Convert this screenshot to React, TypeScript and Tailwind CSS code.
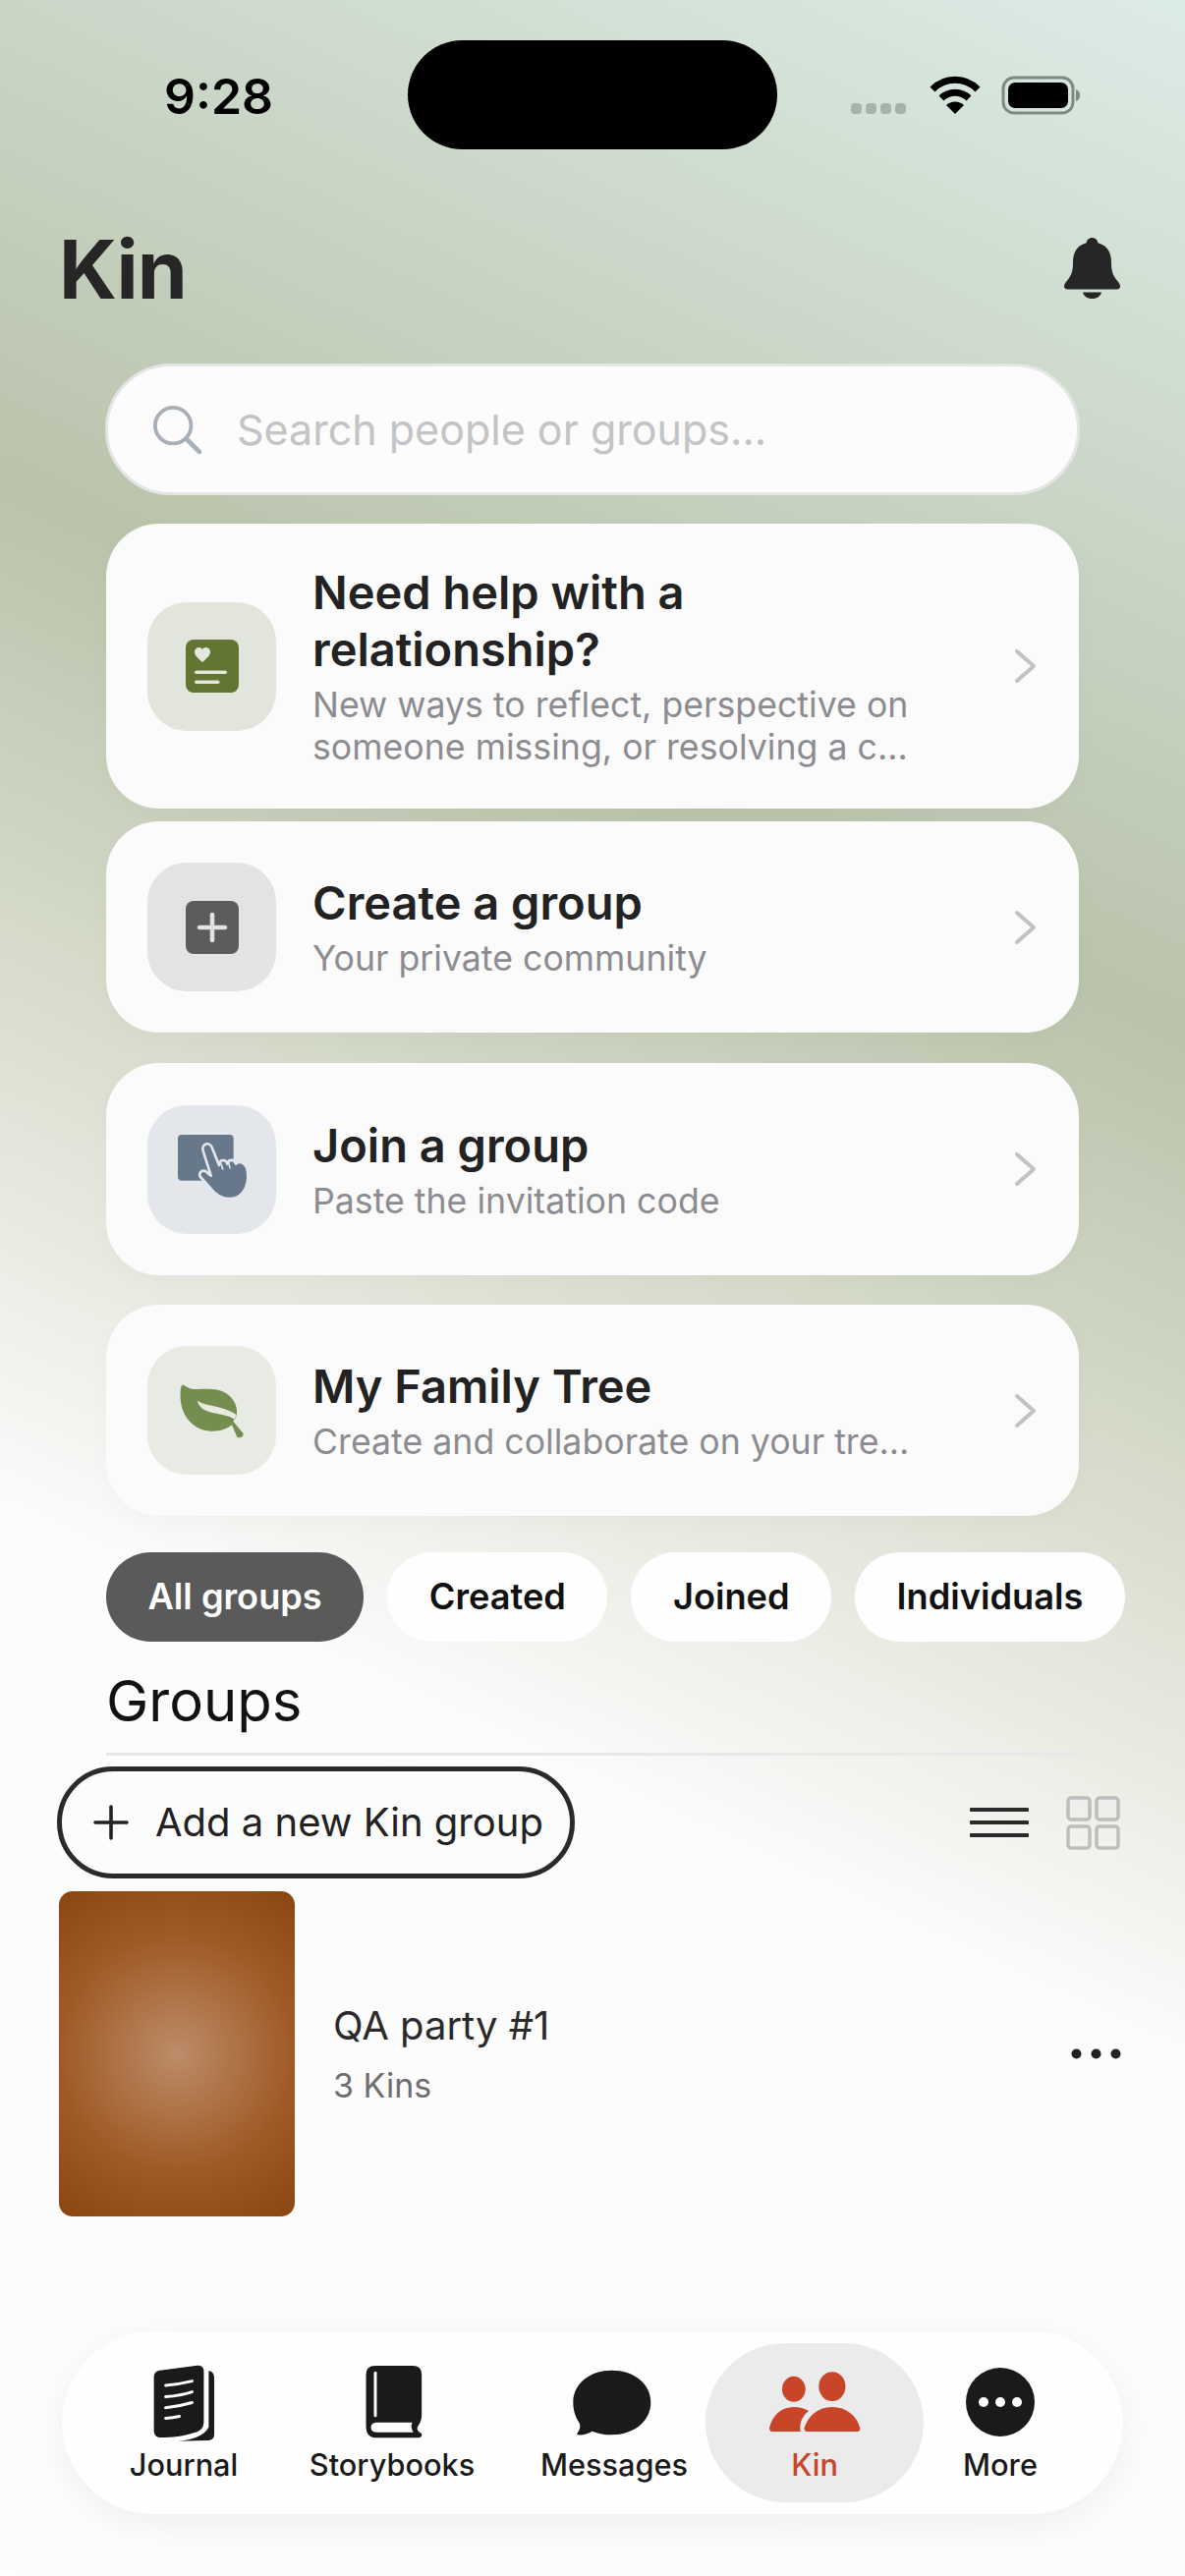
const cardShadow = 'shadow-[0_6px_24px_rgba(0,0,0,0.025)]'

function Chevron() {
  return (
    <svg width="24" height="36" viewBox="0 0 24 36" fill="none" className="ml-auto shrink-0">
      <path d="M3 3 L20 18 L3 33" stroke="#c2c2c2" strokeWidth="4" strokeLinecap="round" strokeLinejoin="round" />
    </svg>
  )
}

function NoteIcon() {
  return (
    <svg width="54" height="54" viewBox="0 0 54 54">
      <rect width="54" height="54" rx="8" fill="#627532" />
      <path d="M17 23 C12 18.5 9 16 9 12.5 C9 9.8 11.2 8 13.6 8 C15.2 8 16.3 8.8 17 10 C17.7 8.8 18.8 8 20.4 8 C22.8 8 25 9.8 25 12.5 C25 16 22 18.5 17 23Z" fill="#e4e7dc" />
      <rect x="9" y="31.5" width="33" height="3.6" rx="1.8" fill="#e4e7dc" />
      <rect x="9" y="41.5" width="25.5" height="3.6" rx="1.8" fill="#e4e7dc" />
    </svg>
  )
}

function PlusIcon() {
  return (
    <svg width="54" height="54" viewBox="0 0 54 54">
      <rect width="54" height="54" rx="8" fill="#5c5c5c" />
      <path d="M27 14 V40 M14 27 H40" stroke="#e2e2e2" strokeWidth="4.5" strokeLinecap="round" />
    </svg>
  )
}

function HandIcon() {
  return (
    <svg width="131" height="131" viewBox="60 43 393 393">
      <rect x="153" y="133" width="170" height="140" rx="12" fill="#67788a" />
      <path
        d="M222 262 C214 250 228 238 240 246 L254 258 L230 182 C224 160 250 152 258 174 L279 226 C280 208 300 206 304 222 C308 206 326 208 330 222 C345 208 364 224 366 246 C372 296 346 330 310 328 C284 328 268 316 254 298 Z"
        fill="#67788a"
        stroke="#e3e7eb"
        strokeWidth="8"
        strokeLinejoin="round"
      />
      <path d="M285 222 L290 238 M308 218 L312 234" stroke="#e3e7eb" strokeWidth="5" strokeLinecap="round" />
    </svg>
  )
}

function LeafIcon() {
  return (
    <svg width="131" height="131" viewBox="60 62 393 393">
      <path
        d="M165 182 C172 178 180 190 195 193 C225 198 262 186 296 204 C322 218 336 246 333 270 C332 280 326 288 322 292 L352 328 C356 338 342 346 334 340 L318 303 C296 322 258 328 224 316 C188 302 166 268 162 232 C160 212 160 192 165 182Z"
        fill="#748e50"
      />
      <path d="M212 228 C232 248 282 240 332 272 L326 286 C290 262 222 276 212 228Z" fill="#e8ebe3" />
    </svg>
  )
}

function BellIcon() {
  return (
    <svg width="57" height="62" viewBox="0 0 57 62" fill="#262626">
      <path d="M28.5 0C25 0 23 2.4 22.6 5.2 C13 7.8 9 15 9 25 C9 34 7.5 38 3.5 43 C1 46 0 47.5 0 49.5 C0 51.5 1.5 52.5 3.5 52.5 H53.5 C55.5 52.5 57 51.5 57 49.5 C57 47.5 56 46 53.5 43 C49.5 38 48 34 48 25 C48 15 44 7.8 34.4 5.2 C34 2.4 32 0 28.5 0Z" />
      <path d="M19 55.5 H38 C37 59.5 33.5 62 28.5 62 C23.5 62 20 59.5 19 55.5Z" />
    </svg>
  )
}

function StatusIcons() {
  return (
    <svg width="234" height="40" viewBox="0 0 234 40">
      {/* signal dots */}
      <rect x="1" y="28" width="11" height="11" rx="4" fill="#a7b3a9" />
      <rect x="16" y="28" width="11" height="11" rx="4" fill="#a7b3a9" />
      <rect x="31" y="28" width="11" height="11" rx="4" fill="#a7b3a9" />
      <rect x="46" y="28" width="11" height="11" rx="4" fill="#a7b3a9" />
      {/* wifi */}
      <path d="M84 14 A32 32 0 0 1 130 14" fill="none" stroke="#000" strokeWidth="7" />
      <path d="M93 23 A20 20 0 0 1 121 23" fill="none" stroke="#000" strokeWidth="7" />
      <path d="M107 39 L98 30 A13 13 0 0 1 116 30 Z" fill="#000" />
      {/* battery */}
      <rect x="156" y="2" width="71" height="36" rx="11" fill="none" stroke="#7d8a82" strokeWidth="3" />
      <rect x="161" y="7" width="61" height="26" rx="7" fill="#000" />
      <path d="M230 14 C233 15 234 17 234 20 C234 23 233 25 230 26 Z" fill="#7d8a82" />
    </svg>
  )
}

function JournalIcon() {
  return (
    <svg width="73" height="83" viewBox="60 40 220 250">
      <path d="M245 68 C258 70 262 78 262 92 V262 C262 276 254 280 240 281 L150 283 C190 280 232 268 245 240 Z" fill="#1a1a1a" />
      <path d="M96 66 L210 51 C222 50 230 56 230 70 V220 C230 242 222 250 205 256 C170 268 130 272 98 272 C84 272 77 264 77 250 V86 C77 74 84 68 96 66Z" fill="#1a1a1a" />
      <g stroke="#fff" strokeWidth="9" strokeLinecap="round" fill="none">
        <path d="M113 112 C140 110 170 105 194 99" />
        <path d="M113 147 C140 145 170 140 194 132" />
        <path d="M113 181 C140 178 170 172 194 165" />
        <path d="M113 213 C128 212 142 210 155 207" />
      </g>
    </svg>
  )
}

function BookIcon() {
  return (
    <svg width="62" height="74" viewBox="720 55 185 222" className="ml-[4px]">
      <path d="M755 55 H870 Q897 55 897 82 V205 Q897 225 885 240 Q878 252 897 262 Q900 275 885 275 H760 Q727 275 727 240 V82 Q727 55 755 55 Z" fill="#1a1a1a" />
      <path d="M762 228 H868 Q862 245 872 258 H762 Q742 258 742 243 Q742 228 762 228 Z" fill="#fff" />
      <rect x="751" y="72" width="9" height="140" rx="4.5" fill="#fff" />
    </svg>
  )
}

function MessageIcon() {
  return (
    <svg width="80" height="67" viewBox="68 55 240 201" className="mr-[4px]">
      <path d="M187 57 C253 57 306 96 306 155 C306 214 253 254 187 254 C165 254 145 250 127 243 C115 251 98 255 84 254 C80 253 80 250 83 247 C90 238 92 228 88 218 C76 201 69 180 69 155 C69 96 121 57 187 57Z" fill="#1a1a1a" />
    </svg>
  )
}

function PeopleIcon() {
  return (
    <svg width="94" height="64" viewBox="666 70 284 190" fill="#c8452a">
      <ellipse cx="744" cy="125" rx="36" ry="39" />
      <ellipse cx="862" cy="117" rx="41" ry="45" />
      <path d="M669 245 C678 205 706 180 744 180 C762 180 776 184 790 192 C770 208 760 230 765 256 H680 Q669 256 669 245Z" />
      <path d="M776 245 C788 206 820 180 862 180 C905 180 938 206 948 245 Q948 256 938 256 H788 Q776 256 776 245Z" />
    </svg>
  )
}

function MoreIcon() {
  return (
    <svg width="70" height="70" viewBox="0 0 70 70">
      <circle cx="35" cy="35" r="35" fill="#1a1a1a" />
      <circle cx="18" cy="35" r="5" fill="#fff" />
      <circle cx="35" cy="35" r="5" fill="#fff" />
      <circle cx="52" cy="35" r="5" fill="#fff" />
    </svg>
  )
}

function ActionCard({
  icon,
  tile,
  title,
  sub,
  className,
}: {
  icon: React.ReactNode
  tile: string
  title: string[]
  sub: string[]
  className: string
}) {
  return (
    <div className={`flex items-center rounded-[54px] bg-[#fbfbfb] pl-[42px] pr-[42px] ${cardShadow} ${className}`}>
      <div className={`flex h-[131px] w-[131px] shrink-0 items-center justify-center rounded-[40px] ${tile}`}>{icon}</div>
      <div className="ml-[37px]">
        {title.map((t) => (
          <div key={t} className="text-[47px] font-semibold leading-[58px] text-[#222222]">
            {t}
          </div>
        ))}
        <div className="mt-[6px]">
          {sub.map((t) => (
            <div key={t} className="text-[35.7px] leading-[43px] text-[#8c8c90]">
              {t}
            </div>
          ))}
        </div>
      </div>
      <Chevron />
    </div>
  )
}

function Chip({ label, active }: { label: string; active?: boolean }) {
  return (
    <div
      className={`flex h-[91px] shrink-0 items-center rounded-[46px] px-[42.5px] text-[36.2px] font-semibold ${
        active ? 'bg-[#5a5a5a] text-white' : 'bg-[#fefefe] text-[#111111]'
      }`}
    >
      {label}
    </div>
  )
}

function NavItem({
  icon,
  label,
  className,
  active,
}: {
  icon: React.ReactNode
  label: string
  className: string
  active?: boolean
}) {
  return (
    <div className={`flex h-[162px] shrink-0 flex-col items-center rounded-[81px] pt-[20px] ${className}`}>
      <div className="flex h-[80px] items-center justify-center">{icon}</div>
      <div className={`mt-[4px] text-[30.7px] font-medium leading-[40px] ${active ? 'text-[#c8452a]' : 'text-[#1a1a1a]'}`}>{label}</div>
    </div>
  )
}

export default function App() {
  return (
    <div
      className="flex h-[2622px] w-[1206px] flex-col overflow-hidden bg-[linear-gradient(205deg,#dcece6_0%,#bac3ab_33%,#dbdfd0_50%,#fcfcfc_66%,#fdfdfd_100%)]"
      style={{ fontFamily: 'Inter, "Noto Sans", sans-serif' }}
    >
      {/* status bar */}
      <div className="mt-[41px] flex h-[111px] items-center">
        <div className="w-[415px] pl-[167px] pt-[2px] text-[50px] font-semibold leading-none text-black">9:28</div>
        <div className="h-[111px] w-[376px] rounded-[56px] bg-black" />
        <div className="ml-[74px]">
          <StatusIcons />
        </div>
      </div>

      {/* header */}
      <div className="mt-[86px] flex h-[70px] items-center justify-between pl-[60px] pr-[66px]">
        <div className="pt-[3px] text-[82px] font-bold leading-[70px] tracking-[-1px] text-[#262626]">Kin</div>
        <BellIcon />
      </div>

      <div className="mx-[107px] mt-[62px] flex h-[134px] items-center rounded-[67px] border-[3px] border-[#e4e6e3] bg-[#fcfcfc] pl-[45px]">
        <svg width="50" height="50" viewBox="0 0 52 52" fill="none">
          <circle cx="22" cy="22" r="19" stroke="#a9afb7" strokeWidth="4" />
          <path d="M36 36 L50 50" stroke="#a9afb7" strokeWidth="5" strokeLinecap="round" />
        </svg>
        <div className="ml-[36px] text-[43px] leading-none text-[#c2c4c6]">Search people or groups...</div>
      </div>

      <div className="ml-[108px] mr-[108px] mt-[29px] flex flex-col">
        <ActionCard
          className="h-[290px]"
          tile="bg-[#e1e5db]"
          icon={<NoteIcon />}
          title={['Need help with a', 'relationship?']}
          sub={['New ways to reflect, perspective on', 'someone missing, or resolving a c...']}
        />
        <ActionCard
          className="mt-[13px] h-[215px]"
          tile="bg-[#e3e3e3]"
          icon={<PlusIcon />}
          title={['Create a group']}
          sub={['Your private community']}
        />
        <ActionCard
          className="mt-[31px] h-[216px]"
          tile="bg-[#e3e7eb]"
          icon={<HandIcon />}
          title={['Join a group']}
          sub={['Paste the invitation code']}
        />
        <ActionCard
          className="mt-[30px] h-[215px]"
          tile="bg-[#e8ebe3]"
          icon={<LeafIcon />}
          title={['My Family Tree']}
          sub={['Create and collaborate on your tre...']}
        />
      </div>

      {/* filter chips */}
      <div className="ml-[108px] mt-[37px] flex w-[1038px] gap-[24px] overflow-hidden">
        <Chip label="All groups" active />
        <Chip label="Created" />
        <Chip label="Joined" />
        <Chip label="Individuals" />
      </div>

      <div className="ml-[108px] mr-[108px] mt-[24px] border-b-[3px] border-[#e8e8e8] pb-[16px] text-[58px] leading-[73px] text-[#111111]">
        Groups
      </div>

      <div className="ml-[58px] mr-[66px] mt-[11px] flex items-center justify-between">
        <div className="flex h-[114px] w-[527px] items-center rounded-[57px] border-[5px] border-[#2a2a2a] pl-[32px]">
          <svg width="36" height="36" viewBox="0 0 36 36" fill="none">
            <path d="M18 2 V34 M2 18 H34" stroke="#222222" strokeWidth="3.6" strokeLinecap="round" />
          </svg>
          <span className="ml-[27px] text-[40px] leading-none text-[#222222]">Add a new Kin group</span>
        </div>
        <div className="flex items-center gap-[38px]">
          <svg width="60" height="32" viewBox="0 0 60 32" fill="none">
            <path d="M1.5 3 H58.5 M1.5 16 H58.5 M1.5 29 H58.5" stroke="#2a2a2a" strokeWidth="4" strokeLinecap="round" />
          </svg>
          <svg width="55" height="55" viewBox="0 0 55 55" fill="none" stroke="#bdbdbd" strokeWidth="3.5">
            <rect x="2" y="2" width="22" height="22" rx="3" />
            <rect x="31" y="2" width="22" height="22" rx="3" />
            <rect x="2" y="31" width="22" height="22" rx="3" />
            <rect x="31" y="31" width="22" height="22" rx="3" />
          </svg>
        </div>
      </div>

      {/* group row */}
      <div className="ml-[60px] mr-[65px] mt-[13px] flex items-center">
        <div className="h-[331px] w-[240px] rounded-[14px] bg-[radial-gradient(circle_at_center,#bc8c69_0%,#a05a26_58%,#8b4510_100%)]" />
        <div className="ml-[39px]">
          <div className="text-[40px] leading-[50px] text-[#2a2a2a]">QA party #1</div>
          <div className="mt-[14px] text-[34px] leading-[44px] text-[#6e6e6e]">3 Kins</div>
        </div>
        <svg width="51" height="11" viewBox="0 0 51 11" className="ml-auto" fill="#222222">
          <circle cx="5.5" cy="5.5" r="5" />
          <circle cx="25.5" cy="5.5" r="5" />
          <circle cx="45.5" cy="5.5" r="5" />
        </svg>
      </div>

      {/* bottom nav */}
      <div className="mx-[63px] mb-[63px] mt-auto flex h-[186px] items-center rounded-[93px] bg-[#fefefe] pl-[30px] shadow-[0_10px_40px_rgba(0,0,0,0.06)]">
        <NavItem className="w-[188px]" icon={<JournalIcon />} label="Journal" />
        <NavItem className="w-[236px]" icon={<BookIcon />} label="Storybooks" />
        <NavItem className="ml-[15px] w-[186px]" icon={<MessageIcon />} label="Messages" />
        <NavItem className="w-[222px] bg-[#ebebeb]" icon={<PeopleIcon />} label="Kin" active />
        <NavItem className="w-[156px]" icon={<MoreIcon />} label="More" />
      </div>
    </div>
  )
}
